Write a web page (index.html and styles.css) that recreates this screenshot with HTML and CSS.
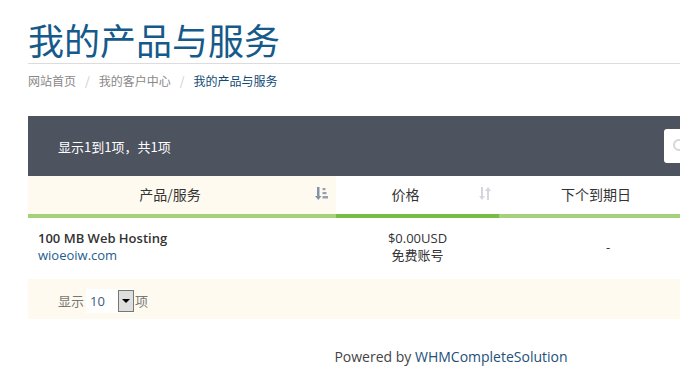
FILE: index.html
```html
<!DOCTYPE html>
<html lang="zh-CN">
<head>
    <meta charset="UTF-8">
    <meta name="viewport" content="width=device-width, initial-scale=1.0">
    <title>我的产品与服务</title>
    <link rel="stylesheet" href="styles.css">
</head>
<body>
    <div class="wrap">
        <h1 class="page-title">我的产品与服务</h1>
        <ol class="crumbs">
            <li><a href="#">网站首页</a></li>
            <li><a href="#">我的客户中心</a></li>
            <li class="active">我的产品与服务</li>
        </ol>

        <div class="list">
            <div class="list-top">
                <span class="list-info">显示1到1项，共1项</span>
                <div class="search">
                    <svg width="16" height="16" viewBox="0 0 16 16">
                        <circle cx="7" cy="7" r="5" fill="none" stroke="#d6d6d6" stroke-width="2"/>
                        <line x1="11" y1="11" x2="15" y2="15" stroke="#d6d6d6" stroke-width="2"/>
                    </svg>
                </div>
            </div>

            <table class="services">
                <colgroup>
                    <col class="c-product">
                    <col class="c-price">
                    <col class="c-due">
                    <col>
                </colgroup>
                <thead>
                    <tr>
                        <th class="sorted">产品/服务
                            <svg class="sort" width="13" height="13" viewBox="0 0 13 13">
                                <path d="M2 0h2.5v9h2l-3.2 4-3.3-4h2z" fill="#8593a4"/>
                                <rect x="7.5" y="1" width="3" height="2.2" fill="#94a1b1"/>
                                <rect x="7.5" y="5" width="4" height="2.2" fill="#94a1b1"/>
                                <rect x="7.5" y="9" width="5.5" height="2.5" fill="#94a1b1"/>
                            </svg>
                        </th>
                        <th class="active-col">价格
                            <svg class="sort" width="12" height="13" viewBox="0 0 12 13">
                                <path d="M2 0h2v9h2l-3 4-3-4h2z" fill="#d4d8de"/>
                                <path d="M8 13h2V4h2L9 0 6 4h2z" fill="#d4d8de"/>
                            </svg>
                        </th>
                        <th>下个到期日</th>
                        <th></th>
                    </tr>
                </thead>
                <tbody>
                    <tr>
                        <td class="product">
                            <strong>100 MB Web Hosting</strong>
                            <a href="#">wioeoiw.com</a>
                        </td>
                        <td class="center">$0.00USD<br>免费账号</td>
                        <td class="center">-</td>
                        <td class="center"></td>
                    </tr>
                </tbody>
            </table>

            <div class="list-foot">
                显示
                <span class="length">
                    <span class="length-val">10</span>
                    <span class="length-btn"></span>
                </span>
                项
            </div>
        </div>
    </div>

    <footer class="powered">Powered by <a href="#">WHMCompleteSolution</a></footer>
</body>
</html>
```

FILE: styles.css
```css
html {
    overflow: hidden;
}
* {
    box-sizing: border-box;
}
body {
    margin: 0;
    width: 902px;
    font-family: "Open Sans", "Noto Sans CJK SC", sans-serif;
    font-size: 13px;
    color: #333;
    background-color: #fff;
}
a {
    text-decoration: none;
}
.wrap {
    padding: 0 28px;
}
.page-title {
    margin: 17px 0 0;
    padding-bottom: 2px;
    font-family: "Noto Sans CJK SC", sans-serif;
    font-size: 36px;
    font-weight: normal;
    line-height: 44px;
    color: #155a8a;
    border-bottom: 1px solid #dcdcdc;
}
.crumbs {
    display: flex;
    list-style: none;
    margin: 7px 0 0;
    padding: 0;
    font-family: "Noto Sans CJK SC", sans-serif;
    font-size: 12px;
    line-height: 20px;
}
.crumbs a {
    color: #888;
}
.crumbs li + li::before {
    content: "/";
    padding: 0 9px 0 9px;
    color: #ccc;
}
.crumbs .active {
    color: #0f4a75;
}

/* список */
.list {
    margin-top: 25px;
}
.list-top {
    display: flex;
    align-items: center;
    justify-content: space-between;
    height: 60px;
    padding: 0 10px 0 30px;
    background-color: #4d535f;
}
.list-info {
    font-family: "Noto Sans CJK SC", sans-serif;
    font-size: 13px;
    color: #fff;
}
.search {
    display: flex;
    align-items: center;
    width: 200px;
    height: 34px;
    padding-left: 8px;
    background-color: #fff;
    border-radius: 3px;
}
.services {
    width: 100%;
    border-collapse: collapse;
    table-layout: fixed;
}
.c-product { width: 308px; }
.c-price { width: 163px; }
.c-due { width: 218px; }
.services th {
    position: relative;
    height: 40px;
    padding: 0 24px 2px 0;
    font-family: "Noto Sans CJK SC", sans-serif;
    font-size: 14px;
    font-weight: normal;
    color: #333;
    border-bottom: 4px solid #a4d17a;
}
.services th.sorted {
    background-color: #fffaef;
}
.services th.active-col {
    border-bottom-color: #77bd43;
}
.sort {
    position: absolute;
    right: 8px;
    top: 11px;
}
.services td {
    height: 63px;
    padding: 0 0 3px;
    line-height: 17px;
    vertical-align: middle;
}
.services td.product {
    padding-left: 10px;
}
.product strong {
    display: block;
    font-weight: 600;
    color: #333;
}
.product a {
    display: block;
    color: #1f5d8c;
}
.services td.center {
    text-align: center;
}
.list-foot {
    display: flex;
    align-items: center;
    height: 40px;
    padding: 3px 0 0 30px;
    background-color: #fffaef;
    font-family: "Noto Sans CJK SC", sans-serif;
    font-size: 13px;
    color: #777;
}
.length {
    display: flex;
    align-items: center;
    width: 48px;
    height: 24px;
    margin: 0 1px 0 2px;
    background-color: #fff;
}
.length-val {
    flex: 1;
    padding-left: 4px;
    font-family: "Open Sans", sans-serif;
    color: #3a5a80;
}
.length-btn {
    position: relative;
    width: 16px;
    height: 22px;
    background-color: #dedede;
    border: 1px solid #777;
}
.length-btn::after {
    content: "";
    position: absolute;
    left: 3px;
    top: 8px;
    border-left: 4px solid transparent;
    border-right: 4px solid transparent;
    border-top: 4px solid #000;
}
.powered {
    margin-top: 28px;
    text-align: center;
    font-size: 14px;
    line-height: 20px;
    color: #444;
}
.powered a {
    color: #22507a;
}
```
